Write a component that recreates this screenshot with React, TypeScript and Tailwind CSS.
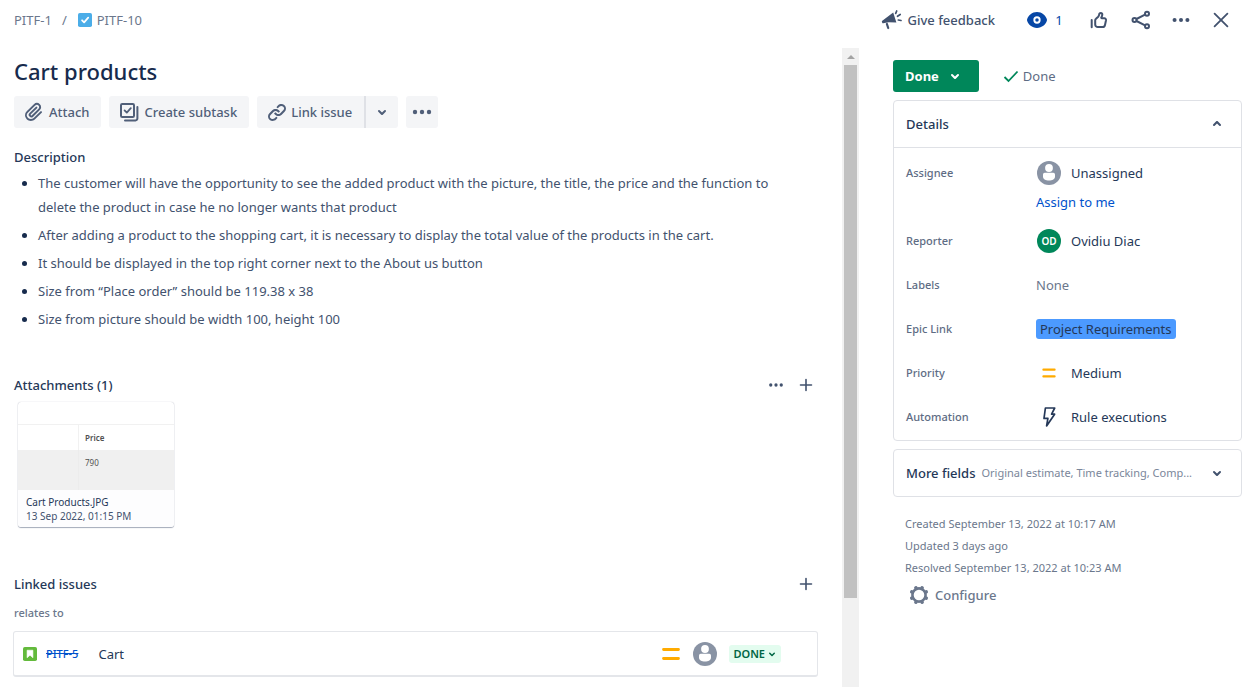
import type { ReactNode } from 'react';

type IconProps = { className?: string };

function Svg({ className = 'size-6', children }: IconProps & { children: ReactNode }) {
  return (
    <svg viewBox="0 0 24 24" fill="none" aria-hidden="true" className={`shrink-0 ${className}`}>
      {children}
    </svg>
  );
}

const ChevronDown = ({ className }: IconProps) => (
  <Svg className={className}>
    <path
      fill="currentColor"
      d="M8.292 10.293a1.009 1.009 0 000 1.419l2.939 2.965c.218.215.5.322.779.322s.556-.107.769-.322l2.93-2.955a1.01 1.01 0 000-1.419.987.987 0 00-1.406 0l-2.298 2.317-2.307-2.327a.99.99 0 00-1.406 0z"
    />
  </Svg>
);

const AttachIcon = () => (
  <Svg>
    <path
      fill="currentColor"
      d="M11.643 17.965c-1.53 1.495-4.016 1.496-5.542.004a3.773 3.773 0 01.002-5.412l7.147-6.985a2.316 2.316 0 013.233-.003c.893.873.895 2.282.004 3.153l-6.703 6.55a.653.653 0 01-.914-.008.62.62 0 010-.902l6.229-6.087a.941.941 0 000-1.353.995.995 0 00-1.384 0l-6.23 6.087a2.502 2.502 0 000 3.607 2.643 2.643 0 003.683.009l6.703-6.55a4.074 4.074 0 00-.003-5.859 4.306 4.306 0 00-6.002.003l-7.148 6.985a5.655 5.655 0 00-.001 8.118c2.29 2.239 6.015 2.238 8.31-.005l6.686-6.533a.941.941 0 000-1.353.995.995 0 00-1.384 0l-6.686 6.534z"
    />
  </Svg>
);

const SubtaskIcon = () => (
  <Svg>
    <rect x="4" y="4" width="13" height="13" rx="1.2" stroke="currentColor" strokeWidth="2" />
    <path d="M7.6 10.4l2.2 2.2 4-4.4" stroke="currentColor" strokeWidth="1.8" strokeLinecap="round" strokeLinejoin="round" />
    <path d="M20.4 7v11.6a1.8 1.8 0 01-1.8 1.8H8" stroke="currentColor" strokeWidth="2" strokeLinecap="round" />
  </Svg>
);

const LinkIcon = () => (
  <Svg>
    <g fill="currentColor">
      <path d="M12.856 5.457l-.937.92a1.002 1.002 0 000 1.437 1.047 1.047 0 001.463 0l.984-.966c.967-.95 2.542-1.135 3.602-.288a2.54 2.54 0 01.203 3.81l-2.903 2.852a2.646 2.646 0 01-3.696 0l-1.11-1.09L9 13.57l1.108 1.089c1.822 1.788 4.802 1.788 6.622 0l2.905-2.852a4.558 4.558 0 00-.357-6.82c-1.893-1.517-4.695-1.226-6.422.47" />
      <path d="M11.144 19.543l.937-.92a1.002 1.002 0 000-1.437 1.047 1.047 0 00-1.462 0l-.985.966c-.967.95-2.542 1.135-3.602.288a2.54 2.54 0 01-.203-3.81l2.903-2.852a2.646 2.646 0 013.696 0l1.11 1.09L15 11.43l-1.108-1.089c-1.822-1.788-4.802-1.788-6.622 0l-2.905 2.852a4.558 4.558 0 00.357 6.82c1.893 1.517 4.695 1.226 6.422-.47" />
    </g>
  </Svg>
);

const MoreIcon = ({ className }: IconProps) => (
  <Svg className={className}>
    <g fill="currentColor">
      <circle cx="5" cy="12" r="2.2" />
      <circle cx="12" cy="12" r="2.2" />
      <circle cx="19" cy="12" r="2.2" />
    </g>
  </Svg>
);

const PlusIcon = () => (
  <Svg>
    <path d="M12 6.5v11M6.5 12h11" stroke="currentColor" strokeWidth="1.6" strokeLinecap="round" />
  </Svg>
);

const MegaphoneIcon = () => (
  <Svg>
    <path fill="currentColor" d="M13.2 4.4l3.2 10.2-7.600-.3-5.600 1a.9.9 0 01-1-.6l-.3-.9a.9.9 0 01.4-1.100z" />
    <path d="M6.900 16l1.300 4" stroke="currentColor" strokeWidth="2.200" strokeLinecap="round" />
    <path d="M15.700 5.400l1-2.400M17.500 8.300l2.700-1.800M18.300 12l2.700.5" stroke="currentColor" strokeWidth="1.700" strokeLinecap="round" />
  </Svg>
);

const EyeIcon = () => (
  <Svg>
    <path fill="currentColor" d="M12 4C7 4 3.300 7.500 2.200 10.900a3.400 3.400 0 000 2.200C3.300 16.500 7 20 12 20s8.700-3.500 9.800-6.900a3.400 3.400 0 000-2.200C20.700 7.500 17 4 12 4z" />
    <circle cx="12" cy="12" r="2.700" stroke="#fff" strokeWidth="1.900" />
  </Svg>
);

const ThumbIcon = () => (
  <Svg>
    <path d="M4.700 12v7.200" stroke="currentColor" strokeWidth="2" strokeLinecap="round" />
    <path
      d="M8.200 12.400c0-.7.3-1.300.8-1.700l2.200-2c.4-.4.7-.9.8-1.500l.3-1.100c.1-.8.8-1.200 1.500-1.200.9 0 1.500.7 1.500 1.500 0 1.200-.4 2-1 3-.2.4.1.8.5.8h2.500a1.700 1.700 0 011.700 2l-1 4.800a2.600 2.600 0 01-2.600 2.100h-4.600a2.600 2.600 0 01-2.600-2.600z"
      stroke="currentColor"
      strokeWidth="2"
      strokeLinejoin="round"
    />
  </Svg>
);

const ShareIcon = () => (
  <Svg>
    <g stroke="currentColor" strokeWidth="2">
      <circle cx="5.500" cy="12" r="2" />
      <circle cx="18" cy="5.700" r="2" />
      <circle cx="18" cy="18.300" r="2" />
      <path d="M7.500 11L16 6.700M7.500 13l8.500 4.300" />
    </g>
  </Svg>
);

const CloseIcon = () => (
  <Svg>
    <path d="M5.600 5.600l12.800 12.800M18.400 5.600L5.600 18.400" stroke="currentColor" strokeWidth="1.800" strokeLinecap="round" />
  </Svg>
);

const PersonIcon = () => (
  <Svg>
    <circle cx="12" cy="12" r="12" fill="#8993A4" />
    <circle cx="12" cy="7" r="3.900" fill="#fff" />
    <path d="M6 13.500a1.700 1.700 0 011.700-1.700h8.600a1.700 1.700 0 011.700 1.700v2.300c0 2.300-2.600 3.700-6 3.700s-6-1.400-6-3.700z" fill="#fff" />
  </Svg>
);

const PriorityIcon = ({ className }: IconProps) => (
  <Svg className={className}>
    <path d="M4.500 7.500h15M4.500 16.500h15" stroke="#FFAB00" strokeWidth="2.800" strokeLinecap="round" />
  </Svg>
);

const BoltIcon = () => (
  <Svg>
    <path d="M8.400 3h9.300l-3.100 6.200h3L9.600 20.900l1.300-7.500H7z" stroke="currentColor" strokeWidth="1.700" strokeLinejoin="round" />
  </Svg>
);

const GearIcon = () => (
  <Svg>
    <circle cx="12" cy="12" r="6.600" stroke="currentColor" strokeWidth="2.600" />
    <g stroke="currentColor" strokeWidth="3.600" strokeLinecap="round">
      <path d="M8.900 4.800l.1.200M15.100 4.800l-.1.200M19.200 8.900l-.2.100M19.200 15.100l-.2-.1M15.100 19.200l-.1-.2M8.900 19.200l.1-.2M4.800 15.100l.2-.1M4.800 8.900l.2.100" />
    </g>
  </Svg>
);

const TaskIcon = () => (
  <Svg className="size-[14px]">
    <rect width="24" height="24" rx="3" fill="#4BADE8" />
    <path d="M7 12.500l3.500 3.500L17.500 8" stroke="#fff" strokeWidth="3" strokeLinecap="round" strokeLinejoin="round" />
  </Svg>
);

const StoryIcon = () => (
  <Svg className="size-[14px]">
    <rect width="24" height="24" rx="3" fill="#63BA3C" />
    <path d="M7 5.500h10v13l-5-4.500-5 4.500z" fill="#fff" stroke="#fff" strokeWidth="1" strokeLinejoin="round" />
  </Svg>
);

const description = [
  'The customer will have the opportunity to see the added product with the picture, the title, the price and the function to delete the product in case he no longer wants that product',
  'After adding a product to the shopping cart, it is necessary to display the total value of the products in the cart.',
  'It should be displayed in the top right corner next to the About us button',
  'Size from “Place order” should be 119.38 x 38',
  'Size from picture should be width 100, height 100',
];

function Field({ label, children }: { label: string; children: ReactNode }) {
  return (
    <div className="flex h-11 items-center">
      <dt className="w-[130px] shrink-0 text-[11px] font-medium text-[#5E6C84]">{label}</dt>
      <dd className="flex items-center">{children}</dd>
    </div>
  );
}

export default function App() {
  return (
    <div className="flex min-h-screen flex-col bg-white font-['Noto_Sans','Open_Sans',sans-serif] text-[13px] leading-5 text-[#253858]">
      <header className="flex h-10 items-center justify-between pr-4 pl-[14px] text-[#42526E]">
        <nav aria-label="Breadcrumb" className="flex items-center text-[#6B778C]">
          <a href="#pitf-1">PITF-1</a>
          <span className="mx-[10px]">/</span>
          <a href="#pitf-10" className="ml-px flex items-center gap-[5px]">
            <TaskIcon />
            PITF-10
          </a>
        </nav>
        <div className="flex items-center gap-4">
          <button className="mr-[14px] flex items-center gap-1 font-medium">
            <MegaphoneIcon />
            Give feedback
          </button>
          <button aria-label="Watchers: 1" className="mr-2 flex items-center gap-[6px] text-[#0747A6]">
            <EyeIcon />
            <span className="w-2">1</span>
          </button>
          <button aria-label="Vote"><ThumbIcon /></button>
          <button aria-label="Share" className="ml-[2px]"><ShareIcon /></button>
          <button aria-label="Actions" className="flex size-6 items-center justify-center"><MoreIcon className="size-[22px]" /></button>
          <button aria-label="Close"><CloseIcon /></button>
        </div>
      </header>

      <div className="flex grow">
        <main className="min-w-0 flex-1 pt-[17px] pr-6 pl-[14px]">
          <h1 className="text-[22px] leading-7 font-medium text-[#172B4D]">Cart products</h1>

          <div className="mt-[11px] flex h-8 gap-2 font-medium text-[#505F79]">
            <button className="flex items-center rounded-[3px] bg-[#F4F5F7] pr-3 pl-2">
              <AttachIcon />
              <span className="ml-[3px]">Attach</span>
            </button>
            <button className="flex items-center rounded-[3px] bg-[#F4F5F7] pr-3 pl-2">
              <SubtaskIcon />
              <span className="ml-[3px]">Create subtask</span>
            </button>
            <div className="flex">
              <button className="flex items-center rounded-l-[3px] bg-[#F4F5F7] pr-3 pl-2">
                <LinkIcon />
                <span className="ml-[2px]">Link issue</span>
              </button>
              <button aria-label="More link types" className="flex w-[34px] items-center justify-center rounded-r-[3px] border-l-2 border-[#DFE1E6] bg-[#F4F5F7]">
                <ChevronDown />
              </button>
            </div>
            <button aria-label="More actions" className="flex w-8 items-center justify-center rounded-[3px] bg-[#F4F5F7]">
              <MoreIcon className="size-6" />
            </button>
          </div>

          <section>
            <h2 className="mt-[19px] font-medium">Description</h2>
            <ul className="mt-1 mr-8 flex list-disc flex-col gap-1 pl-6 leading-6 text-[#42526E] marker:text-[#172B4D]">
              {description.map((line) => (
                <li key={line}>{line}</li>
              ))}
            </ul>
          </section>

          <section className="mt-11">
            <div className="flex h-5 items-center justify-between">
              <h2 className="font-medium">Attachments (1)</h2>
              <div className="flex items-center gap-[9px] text-[#42526E]">
                <button aria-label="Attachment options" className="flex w-[18px] justify-center"><MoreIcon className="size-[18px]" /></button>
                <button aria-label="Add attachment"><PlusIcon /></button>
              </div>
            </div>
            <a href="#attachment" className="mt-[7px] ml-1 block h-[125px] w-[156px] overflow-hidden rounded-[3px] text-[10px] leading-[14px] shadow-[0_1px_1px_rgba(9,30,66,0.35),0_0_1px_rgba(9,30,66,0.31)]">
              <div className="h-[23px] border-b border-[#F1F1F1]" />
              <div className="grid grid-cols-[61px_1fr] text-[8px] text-[#505050]">
                <div className="h-[25px] border-r border-[#F1F1F1]" />
                <div className="flex items-center pl-[6px] font-semibold">Price</div>
                <div className="h-10 border-r border-[#ECECEC] bg-[#F0F0F0]" />
                <div className="bg-[#F0F0F0] pt-[6px] pl-[6px]">790</div>
              </div>
              <div className="h-[37px] bg-[#FDFDFE] px-2 pt-[5px]">
                <div>Cart Products.JPG</div>
                <div className="text-[#42526E]">13 Sep 2022, 01:15 PM</div>
              </div>
            </a>
          </section>

          <section className="mt-[47px]">
            <div className="flex h-5 items-center justify-between">
              <h2 className="font-medium">Linked issues</h2>
              <button aria-label="Link an issue" className="text-[#42526E]"><PlusIcon /></button>
            </div>
            <h3 className="mt-[9px] text-[11px] font-medium text-[#6B778C]">relates to</h3>
            <div className="mt-2 -ml-px flex h-[46px] items-center rounded-[3px] border border-b-2 border-[#E4E6EA] pr-9 pl-[9px]">
              <StoryIcon />
              <a href="#pitf-5" className="ml-[9px] text-[11px] font-medium text-[#0052CC] line-through">PITF-5</a>
              <span className="ml-5 grow">Cart</span>
              <PriorityIcon className="mr-[10px] size-6" />
              <PersonIcon />
              <button className="ml-3 flex h-[18px] items-center rounded-[3px] bg-[#E3FCEF] pl-1 text-[11px] font-semibold text-[#006644]">
                DONE
                <ChevronDown className="-ml-[2px] size-[18px]" />
              </button>
            </div>
          </section>
        </main>

        <div aria-hidden="true" className="mt-2 flex w-[17px] shrink-0 flex-col items-center bg-[#F1F1F1]">
          <div className="flex h-[17px] items-center">
            <svg viewBox="0 0 8 4" className="h-1 w-2"><path d="M0 4l4-4 4 4z" fill="#A3A3A3" /></svg>
          </div>
          <div className="h-[533px] w-[13px] bg-[#C1C1C1]" />
        </div>

        <aside className="w-[390px] shrink-0 pt-5 pr-[7px] pl-[34px]">
          <div className="flex items-center">
            <button className="flex h-8 items-center gap-1 rounded-[3px] bg-[#00875A] pr-3 pl-3 font-bold text-white">
              Done
              <ChevronDown />
            </button>
            <div className="ml-6 flex items-center gap-1 text-[#5E6C84]">
              <svg viewBox="0 0 16 16" fill="none" aria-hidden="true" className="size-4">
                <path d="M1.500 9l4 4 9-9.500" stroke="#00875A" strokeWidth="1.800" />
              </svg>
              Done
            </div>
          </div>

          <section className="mt-2 rounded-[4px] border border-[#DFE1E6]">
            <button className="flex h-[47px] w-full items-center justify-between border-b border-[#DFE1E6] px-3">
              <span className="font-medium">Details</span>
              <ChevronDown className="size-6 rotate-180 text-[#42526E]" />
            </button>
            <dl className="px-3 pt-[3px] pb-px">
              <div className="flex h-[68px]">
                <dt className="mt-3 w-[130px] shrink-0 text-[11px] font-medium text-[#5E6C84]">Assignee</dt>
                <dd className="mt-[10px]">
                  <div className="flex items-center gap-[10px] pl-px">
                    <PersonIcon />
                    Unassigned
                  </div>
                  <a href="#assign" className="mt-[7px] block text-[#0052CC]">Assign to me</a>
                </dd>
              </div>
              <Field label="Reporter">
                <span className="mr-[10px] ml-px flex size-6 items-center justify-center rounded-full bg-[#00875A] text-[10px] font-semibold text-white">OD</span>
                Ovidiu Diac
              </Field>
              <Field label="Labels">
                <span className="text-[#6B778C]">None</span>
              </Field>
              <Field label="Epic Link">
                <a href="#epic" className="rounded-[3px] bg-[#4C9AFF] px-1 text-[#253858]">Project Requirements</a>
              </Field>
              <Field label="Priority">
                <span className="mr-[10px] flex w-[25px] justify-center"><PriorityIcon className="size-[18px]" /></span>
                Medium
              </Field>
              <Field label="Automation">
                <span className="mr-[10px] ml-px"><BoltIcon /></span>
                Rule executions
              </Field>
            </dl>
          </section>

          <button className="mt-2 flex h-12 w-full items-center rounded-[4px] border border-[#DFE1E6] px-3 text-left">
            <span className="shrink-0 font-medium">More fields</span>
            <span className="ml-[6px] grow text-[11px] whitespace-nowrap text-[#7A869A]">
              Original estimate, Time tracking, Comp...
            </span>
            <ChevronDown className="size-6 text-[#42526E]" />
          </button>

          <div className="mt-4 pl-3 text-[11px] leading-[22px] text-[#6B778C]">
            <p>Created September 13, 2022 at 10:17 AM</p>
            <p>Updated 3 days ago</p>
            <p>Resolved September 13, 2022 at 10:23 AM</p>
          </div>
          <button className="mt-1 ml-[14px] flex items-center gap-1 font-medium text-[#6B778C]">
            <GearIcon />
            Configure
          </button>
        </aside>
      </div>
    </div>
  );
}
